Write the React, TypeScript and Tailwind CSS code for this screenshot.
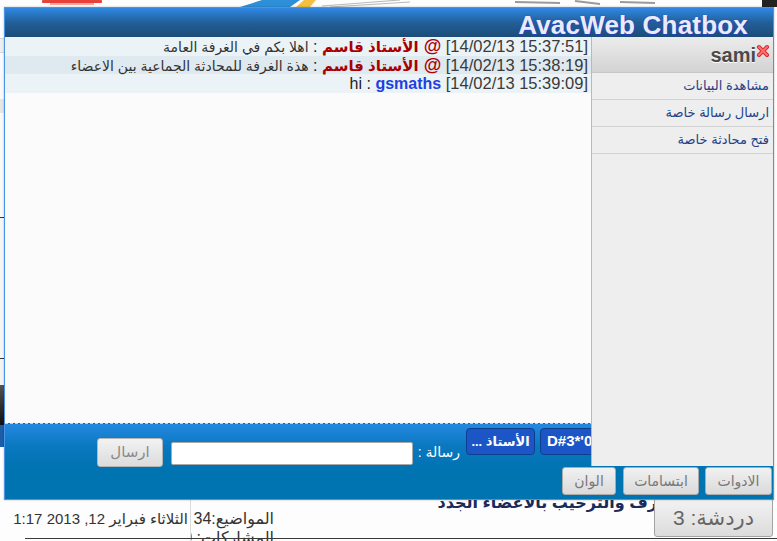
import * as React from "react";

const FONT = "font-['Liberation_Sans','DejaVu_Sans',sans-serif]";

function Banner() {
  // strip of the forum header picture peeking above the chatbox
  return (
    <svg width="777" height="7" viewBox="0 0 777 7" className="block">
      <rect width="777" height="7" fill="#fdfdfd" />
      <rect x="42" y="0" width="60" height="3" rx="1" fill="#e8403a" />
      <rect x="50" y="3" width="44" height="2" fill="#f4a8a0" />
      <path d="M240 7 L262 0 L300 0 L290 7 Z" fill="#2d8fd8" />
      <path d="M296 7 L304 0 L316 0 L310 7 Z" fill="#f5c040" />
      <path d="M322 6 L400 0 M330 7 L410 2" stroke="#b8b8b8" strokeWidth="1" />
      <path d="M515 2 L560 3 M575 1 L600 4 M620 2 L655 3" stroke="#9a9a9a" strokeWidth="2" />
      <rect x="762" y="0" width="15" height="9" fill="#222" />
    </svg>
  );
}

function LeftStrip() {
  return (
    <div className="flex w-[4px] flex-col">
      <div className="h-[31px] bg-[#fdfdfd]" />
      <div className="h-[15px] border-y border-[#d6d6d6] bg-[#eeeeee]" />
      <div className="h-[46px] bg-[#fafafa]" />
      <div className="h-[14px] bg-[#e6e6e6]" />
      <div className="h-[104px] bg-[#f9f9f9]" />
      <div className="h-px bg-[#333]" />
      <div className="h-[140px] bg-[#f6f6f6]" />
      <div className="h-px bg-[#333]" />
      <div className="h-[26px] bg-[#f4f4f4]" />
      <div className="h-[40px] bg-gradient-to-b from-[#555] to-[#111]" />
      <div className="h-[22px] bg-[#1b5da8]" />
      <div className="flex-1 bg-[#fdfdfd]" />
    </div>
  );
}

function Footer() {
  return (
    <div className="flex h-[48px] items-start text-[#333]">
      <div className="flex h-full w-[190px] flex-col items-end pr-[2px] pt-[17px]">
        <div dir="rtl" className="whitespace-nowrap text-[15px] leading-[18px]">
          الثلاثاء فبراير 12, 2013 1:17
        </div>
      </div>
      <div className="h-full w-[90px] overflow-hidden border-l border-[#dcdcdc] pr-[6px] pt-[17px] text-right text-[16px] leading-[18px]">
        <div dir="rtl" className="whitespace-nowrap">المواضيع:34</div>
        <div dir="rtl" className="whitespace-nowrap pt-[1px]">المشاركات: 170</div>
      </div>
      <div className="flex-1" />
      <div dir="rtl" className="mt-[1px] whitespace-nowrap text-[16px] font-bold leading-[18px] text-[#1a2a5a]">
        التعارف والترحيب بالاعضاء الجدد
      </div>
      <div className="relative -ml-[36px] mr-[4px] mt-[5px] flex h-[39px] w-[119px] items-center justify-center rounded-[3px] border border-[#a3a3a3] bg-gradient-to-b from-[#f3f3f3] to-[#dcdcdc] text-[21px] text-[#666]">
        <span dir="rtl" className="whitespace-nowrap">دردشة: 3</span>
      </div>
    </div>
  );
}

type Msg = {
  time: string;
  name: string;
  text: string;
  mod?: boolean;
  latin?: boolean;
};

const messages: Msg[] = [
  { time: "[14/02/13 15:37:51]", name: "الأستاذ قاسم", text: "اهلا بكم في الغرفة العامة", mod: true },
  { time: "[14/02/13 15:38:19]", name: "الأستاذ قاسم", text: "هذة الغرفة للمحادثة الجماعية بين الاعضاء", mod: true },
  { time: "[14/02/13 15:39:09]", name: "gsmaths", text: "hi", latin: true },
];

function MessageRow({ m, i }: { m: Msg; i: number }) {
  return (
    <div
      className={
        i % 2 === 1
          ? "h-[18.5px] whitespace-nowrap bg-[#dfe9f0] pr-[4px] text-right leading-[18.5px]"
          : "h-[18.5px] whitespace-nowrap bg-[#ebf3f7] pr-[4px] text-right leading-[18.5px]"
      }
    >
      {m.latin ? (
        <span className="text-[16px] text-[#222]">{m.text}</span>
      ) : (
        <span dir="rtl" className="text-[14px] text-[#333]">
          {m.text}
        </span>
      )}
      <span className="text-[16px] text-[#222]"> : </span>
      {m.mod ? (
        <>
          <span dir="rtl" className="text-[15px] font-bold text-[#a80000]">
            {m.name}
          </span>
          <span className="text-[18px] font-bold text-[#b00000]"> @</span>
        </>
      ) : (
        <span className="text-[16px] font-bold text-[#1f3fe0]">{m.name}</span>
      )}
      <span className="text-[16.5px] text-[#3a3a3a]"> {m.time}</span>
    </div>
  );
}

function CloseIcon() {
  return (
    <svg width="14" height="14" viewBox="0 0 14 14" className="mb-[8px]">
      <path d="M3 3 L11 11 M11 3 L3 11" stroke="#d42a2a" strokeWidth="4" strokeLinecap="round" />
      <path d="M3 3 L11 11 M11 3 L3 11" stroke="#ff7070" strokeWidth="2" strokeLinecap="round" />
    </svg>
  );
}

function Sidebar() {
  const items = ["مشاهدة البيانات", "ارسال رسالة خاصة", "فتح محادثة خاصة"];
  return (
    <div className="absolute bottom-[33px] right-0 top-[29px] w-[182px] border-l border-[#b9b9b9] bg-[#eeeeee]">
      <div className="flex h-[36px] items-center justify-end border-b border-[#c6c6c6] bg-gradient-to-b from-[#ececec] to-[#d3d3d3] pr-[3px]">
        <span className="text-[20px] font-bold text-[#4a4a4a] [text-shadow:0_1px_0_#fff]">sami</span>
        <CloseIcon />
      </div>
      {items.map((t) => (
        <div
          key={t}
          dir="rtl"
          className="flex h-[27px] items-center border-b border-[#d2d2d2] pr-[4px] text-[13px] text-[#23418a]"
        >
          {t}
        </div>
      ))}
    </div>
  );
}

function InputBar() {
  return (
    <div className="flex h-[76px] flex-col border-t border-dashed border-[#b9d4ee] bg-[linear-gradient(#2488e0,#0a78c0_22px,#0073b1_45px,#0073b1)]">
      <div className="flex h-[43px] items-start pl-[92px]">
        <button className="mt-[14px] h-[29px] w-[66px] rounded-[3px] border border-[#b5b5b5] bg-gradient-to-b from-[#f2f2f2] to-[#dcdcdc] text-[15px] text-[#8a8a8a]">
          ارسال
        </button>
        <div className="ml-[8px] mt-[18px] h-[23px] w-[242px] rounded-[2px] border border-[#a9a9a9] bg-white" />
        <div dir="rtl" className="ml-[5px] mt-[19px] w-[42px] whitespace-nowrap text-[14px] leading-[18px] text-white">
          رسالة :
        </div>
        <button className="ml-[6px] mt-[4px] h-[27px] w-[69px] overflow-hidden whitespace-nowrap rounded-[4px] border border-[#0e3f8e] bg-[#1c56c6] text-[13px] font-bold text-white">
          <span dir="rtl">الأستاذ ...</span>
        </button>
        <button className="ml-[5px] mt-[4px] h-[27px] w-[90px] whitespace-nowrap rounded-[4px] border border-[#0e3f8e] bg-[#1c56c6] pl-[6px] text-left text-[15px] font-bold text-white">
          D#3*'0
        </button>
      </div>
      <div className="flex h-[28px] justify-end gap-[6px] pr-[1px]">
        {["الوان", "ابتسامات", "الادوات"].map((t, i) => (
          <button
            key={t}
            className={
              (i === 0 ? "w-[54px] mr-[1px] " : i === 1 ? "w-[76px] " : "w-[67px] ") +
              "h-[28px] whitespace-nowrap rounded-[3px] border border-[#ababab] bg-gradient-to-b from-[#f1f1f1] to-[#dadada] text-[14px] text-[#787878]"
            }
          >
            {t}
          </button>
        ))}
      </div>
    </div>
  );
}

function Chatbox() {
  return (
    <div className="absolute left-[4px] top-[7px] flex h-[493px] w-[770px] flex-col border border-[#4a94e6] shadow-[0_0_2px_rgba(0,0,0,0.25)]">
      <div className="flex h-[29px] items-end justify-end bg-gradient-to-b from-[#2e89e4] via-[#225f98] to-[#1c4c78] pr-[25px]">
        <span className="text-[26px] font-bold leading-[24px] tracking-[0.2px] text-[#ebebf7] [text-shadow:0_0_2px_#2b4fd8,1px_1px_0_#2340b0]">
          AvacWeb Chatbox
        </span>
      </div>
      <div className="flex-1 bg-[#fbfbfb]">
        <div className="mr-[181px]">
          {messages.map((m, i) => (
            <MessageRow key={i} m={m} i={i} />
          ))}
        </div>
      </div>
      <InputBar />
      <Sidebar />
    </div>
  );
}

export default function App() {
  return (
    <div className={`relative h-[541px] w-[777px] overflow-hidden bg-[#fdfdfd] ${FONT}`}>
      <div className="flex h-full flex-col">
        <Banner />
        <div className="flex h-[486px]">
          <LeftStrip />
          <div className="flex-1 bg-[#fdfdfd]" />
        </div>
        <Footer />
      </div>
      <div className="absolute bottom-[2px] left-[25px] right-0 h-px bg-[#3a3a3a]" />
      <Chatbox />
    </div>
  );
}
